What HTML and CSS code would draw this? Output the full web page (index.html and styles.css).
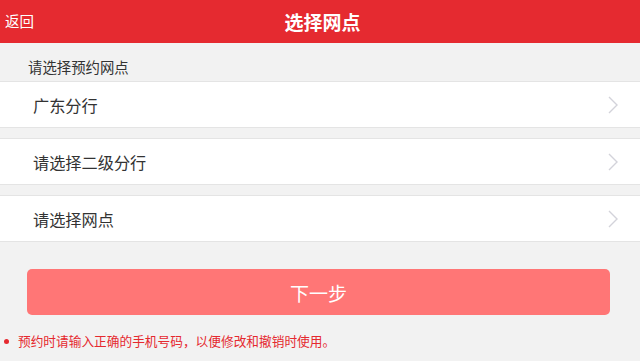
FILE: index.html
```html
<!DOCTYPE html>
<html lang="zh">
<head>
<meta charset="utf-8">
<title>选择网点</title>
<link rel="stylesheet" href="styles.css">
</head>
<body>
<header class="topbar">
  <span class="back">返回</span>
  <h1 class="title">选择网点</h1>
  <span></span>
</header>
<div class="section-label">请选择预约网点</div>
<div class="list">
  <div class="row"><span>广东分行</span><svg class="chev" viewBox="0 0 10 18" width="10" height="18"><path d="M1 1 L9 9 L1 17" fill="none" stroke="#d3d3da" stroke-width="1.4"/></svg></div>
  <div class="row"><span>请选择二级分行</span><svg class="chev" viewBox="0 0 10 18" width="10" height="18"><path d="M1 1 L9 9 L1 17" fill="none" stroke="#d3d3da" stroke-width="1.4"/></svg></div>
  <div class="row"><span>请选择网点</span><svg class="chev" viewBox="0 0 10 18" width="10" height="18"><path d="M1 1 L9 9 L1 17" fill="none" stroke="#d3d3da" stroke-width="1.4"/></svg></div>
</div>
<button class="next">下一步</button>
<p class="note"><span class="dot"></span>预约时请输入正确的手机号码，以便修改和撤销时使用。</p>
</body>
</html>
```
FILE: styles.css
```css
* { box-sizing: border-box; }
html, body { margin: 0; padding: 0; }
body {
  width: 640px;
  height: 361px;
  overflow: hidden;
  background: #f2f2f2;
  font-family: "Noto Sans CJK SC", "Noto Sans", sans-serif;
  color: #333;
  display: flex;
  flex-direction: column;
}
.topbar {
  height: 43px;
  background: #e52a30;
  color: #fff;
  display: grid;
  grid-template-columns: 1fr auto 1fr;
  align-items: center;
  padding: 0 0 0 5px;
}
.back { font-size: 14.5px; line-height: 1; }
.title {
  margin: 0;
  font-size: 19px;
  font-weight: 700;
  line-height: 1;
}
.section-label {
  height: 38px;
  padding: 17px 0 0 28px;
  font-size: 14.4px;
  line-height: 14px;
  color: #333;
}
.list {
  display: flex;
  flex-direction: column;
  gap: 10px;
}
.row {
  height: 47px;
  background: #fff;
  border-top: 1px solid #e4e4e4;
  border-bottom: 1px solid #e4e4e4;
  display: flex;
  align-items: center;
  justify-content: space-between;
  padding: 0 22px 0 33px;
  font-size: 16.2px;
  color: #333;
}
.chev { display: block; }
.next {
  margin: 27px 30px 0 27px;
  height: 46px;
  border: none;
  border-radius: 5px;
  background: #ff7676;
  color: #fff;
  font-family: inherit;
  font-size: 19px;
  padding: 0;
}
.note {
  margin: 19px 0 0 0;
  padding-left: 4px;
  display: flex;
  align-items: center;
  font-size: 12.7px;
  line-height: 14px;
  color: #e5292f;
}
.dot {
  width: 5px;
  height: 5px;
  border-radius: 50%;
  background: #e5292f;
  margin-right: 9px;
}
```
